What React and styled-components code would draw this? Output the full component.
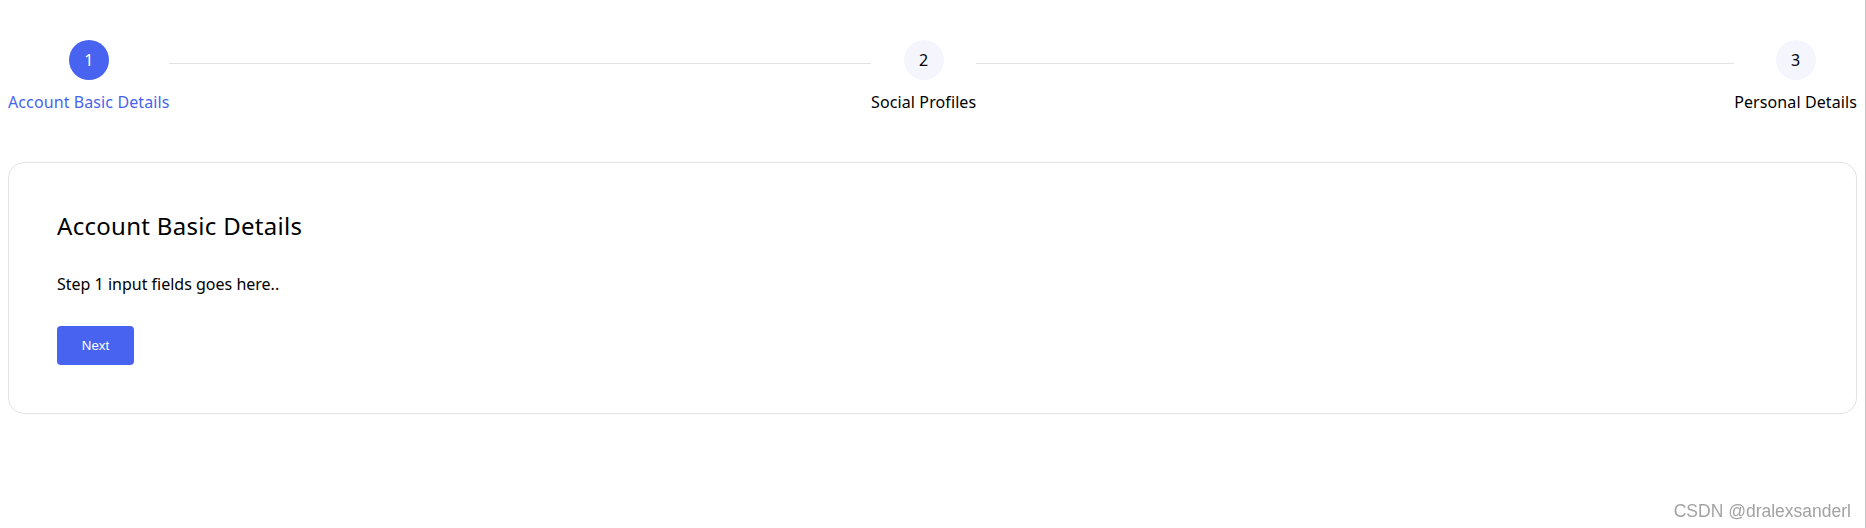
import React from 'react';
import styled, { createGlobalStyle } from 'styled-components';

const GlobalStyle = createGlobalStyle`
  html {
    height: 100%;
    border-right: 1px solid #c4c4c4;
  }
  body {
    margin: 8px;
    font-family: "Noto Sans", "Open Sans", sans-serif;
    color: #000;
    background: #fff;
  }
`;

const BLUE = '#4763f0';

const Stepper = styled.div`
  display: flex;
  align-items: flex-start;
  margin-top: 32px;
`;

const StepItem = styled.div`
  display: flex;
  align-items: flex-start;
  flex: ${(p) => (p.$last ? 'none' : '1 1 0')};
`;

const StepHead = styled.div`
  display: flex;
  flex-direction: column;
  align-items: center;
  flex: none;
  gap: 10px;
`;

const Circle = styled.div`
  width: 40px;
  height: 40px;
  border-radius: 50%;
  display: grid;
  place-items: center;
  font-size: 16px;
  background: ${(p) => (p.$active ? BLUE : '#f5f5fe')};
  color: ${(p) => (p.$active ? '#fff' : '#000')};
`;

const Label = styled.div`
  font-size: 16px;
  line-height: 24px;
  letter-spacing: 0.1px;
  color: ${(p) => (p.$active ? BLUE : '#000')};
  white-space: nowrap;
`;

const Connector = styled.div`
  flex: 1;
  height: 1px;
  margin-top: 23px;
  background: #e2e2e2;
`;

const Card = styled.section`
  margin-top: 48px;
  border: 1px solid #e3e3e3;
  border-radius: 16px;
  padding: 45px 48px 48px;
`;

const Title = styled.h2`
  margin: 0;
  font-size: 24px;
  line-height: 36px;
  font-weight: 400;
  letter-spacing: 0.3px;
`;

const Text = styled.p`
  margin: 28px 0 0;
  font-size: 16px;
  line-height: 24px;
  letter-spacing: 0;
`;

const Button = styled.button`
  display: block;
  margin-top: 30px;
  width: 77px;
  height: 39px;
  border: none;
  border-radius: 4px;
  background: ${BLUE};
  color: #fff;
  font-family: "Liberation Sans", Arial, sans-serif;
  font-size: 13.333px;
  cursor: pointer;
`;

const Watermark = styled.div`
  position: fixed;
  right: 15px;
  bottom: 7px;
  font-family: "Liberation Sans", Arial, sans-serif;
  font-size: 17.5px;
  line-height: 20px;
  color: #a2a2a2;
`;

const steps = ['Account Basic Details', 'Social Profiles', 'Personal Details'];

export default function App() {
  return (
    <>
      <GlobalStyle />
      <Stepper>
        {steps.map((s, i) => {
          const last = i === steps.length - 1;
          return (
            <StepItem key={s} $last={last}>
              <StepHead>
                <Circle $active={i === 0}>{i + 1}</Circle>
                <Label $active={i === 0}>{s}</Label>
              </StepHead>
              {!last && <Connector />}
            </StepItem>
          );
        })}
      </Stepper>
      <Card>
        <Title>Account Basic Details</Title>
        <Text>Step 1 input fields goes here..</Text>
        <Button>Next</Button>
      </Card>
      <Watermark>CSDN @dralexsanderl</Watermark>
    </>
  );
}
